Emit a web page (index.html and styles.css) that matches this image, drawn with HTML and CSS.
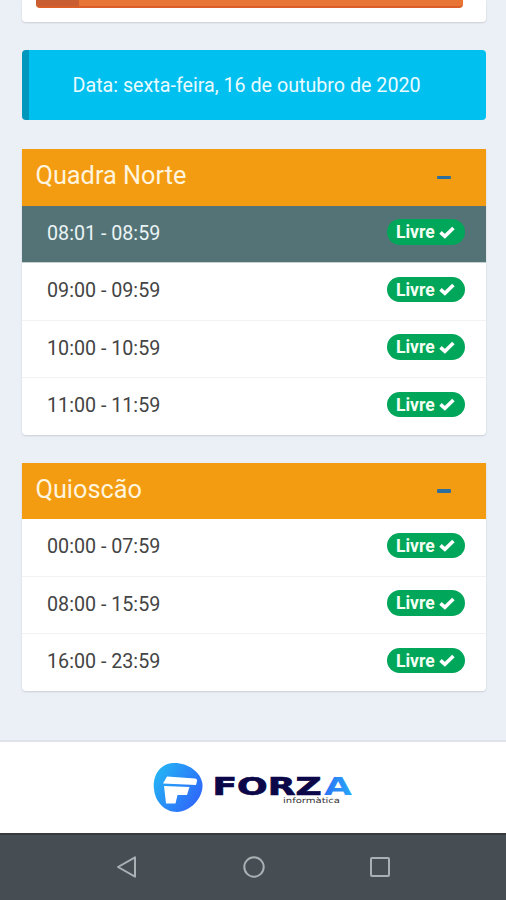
FILE: index.html
```
<!DOCTYPE html>
<html lang="pt-BR">
<head>
<meta charset="utf-8">
<title>Reservas</title>
<link rel="stylesheet" href="styles.css">
</head>
<body>
<svg class="defs" aria-hidden="true">
  <symbol id="check" viewBox="0 0 16 13"><path d="M1.500 6.300 5.900 10.300 14.400 2" fill="none" stroke="#fff" stroke-width="3.600"/></symbol>
</svg>
<main>
  <section class="card top"><div class="progress"><div class="bar"></div></div></section>
  <section class="callout"><span>Data: sexta-feira, 16 de outubro de 2020</span></section>
  <section class="card courts">
    <header><h2>Quadra Norte</h2><i class="minus"></i></header>
    <ul>
      <li class="active"><span class="time">08:01 - 08:59</span><span class="badge">Livre <svg><use href="#check"/></svg></span></li>
      <li><span class="time">09:00 - 09:59</span><span class="badge">Livre <svg><use href="#check"/></svg></span></li>
      <li><span class="time">10:00 - 10:59</span><span class="badge">Livre <svg><use href="#check"/></svg></span></li>
      <li><span class="time">11:00 - 11:59</span><span class="badge">Livre <svg><use href="#check"/></svg></span></li>
    </ul>
  </section>
  <section class="card kiosk">
    <header><h2>Quioscão</h2><i class="minus"></i></header>
    <ul>
      <li><span class="time">00:00 - 07:59</span><span class="badge">Livre <svg><use href="#check"/></svg></span></li>
      <li><span class="time">08:00 - 15:59</span><span class="badge">Livre <svg><use href="#check"/></svg></span></li>
      <li><span class="time">16:00 - 23:59</span><span class="badge">Livre <svg><use href="#check"/></svg></span></li>
    </ul>
  </section>
</main>
<footer>
  <svg class="logo" viewBox="0 0 202 52">
    <defs>
      <linearGradient id="disc" x1="0" y1="0.2" x2="1" y2="0.8"><stop offset="0" stop-color="#25b5f5"/><stop offset="1" stop-color="#2f62fa"/></linearGradient>
      <linearGradient id="tip" x1="0" y1="0" x2="1" y2="0"><stop offset="0" stop-color="#2b70f6"/><stop offset="1" stop-color="#28a9f8"/></linearGradient>
    </defs>
    <path d="M21 1C34 0 49 9 50.500 22C51.500 36 38 50 25 50C12 50 3 39 2 27C0.500 13 8 2 21 1Z" fill="url(#disc)"/>
    <path d="M15 14.500 43 16.500Q45.500 17 45 19L44 23 11 21.500ZM12 24 37.500 25 35 33H25.500L23.500 41.500H14Z" fill="#fff"/>
    <text class="brand" x="60.500" y="32.500" textLength="109" lengthAdjust="spacingAndGlyphs" fill="#0b0748">FORZ</text>
    <text class="brand tip" x="172" y="32.500" textLength="28" lengthAdjust="spacingAndGlyphs" fill="url(#tip)">A</text>
    <text class="sub" x="131" y="41" textLength="57" lengthAdjust="spacingAndGlyphs">informàtica</text>
  </svg>
</footer>
<nav>
  <svg viewBox="0 0 24 24"><path d="M20 2.300V21.700L3 12Z"/></svg>
  <svg viewBox="0 0 24 24"><circle cx="12" cy="12" r="9.700"/></svg>
  <svg viewBox="0 0 24 24"><rect x="3" y="3" width="18" height="18" rx="1"/></svg>
</nav>
</body>
</html>
```
FILE: styles.css
```
* { box-sizing: border-box; }
body {
  margin: 0;
  height: 900px;
  overflow: hidden;
  display: flex;
  flex-direction: column;
  background: #ebeff6;
  color: #444;
  font-family: Roboto, sans-serif;
}
.defs { display: none; }
main { height: 740px; padding: 0 20.500px 0 21.500px; }
.card {
  background: #fff;
  border-radius: 0 0 4px 4px;
  box-shadow: 0 1px 2px rgba(0, 0, 0, 0.14);
}
.top { height: 21.500px; padding: 0 23px 0 14px; }
.progress {
  height: 7.500px;
  background: #e87436;
  border-bottom: 2px solid #d95e27;
  border-radius: 0 0 4px 4px;
  overflow: hidden;
}
.bar { width: 43px; height: 6px; background: #c85e32; }
.callout {
  display: flex;
  align-items: center;
  height: 70px;
  margin-top: 28.500px;
  padding-left: 44px;
  border-left: 7px solid #0097bc;
  border-radius: 4px;
  background: #00c0ef;
  color: #e9fbff;
  font-size: 19.700px;
  white-space: nowrap;
}
.courts { margin-top: 29px; }
.kiosk { margin-top: 28px; }
header {
  display: flex;
  justify-content: space-between;
  height: 56.500px;
  padding: 12px 35px 0 14px;
  background: #f39c12;
  color: #fff4dd;
}
h2 { margin: 0; font-size: 25.300px; font-weight: 400; line-height: 29.500px; }
.minus {
  width: 14px;
  height: 3.500px;
  margin-top: 14.500px;
  border-radius: 1px;
  background: #2c6f9e;
}
ul { margin: 0; padding: 0; list-style: none; }
li {
  display: flex;
  align-items: center;
  justify-content: space-between;
  height: 57.500px;
  padding: 0 21px 3.500px 25.500px;
  border-bottom: 1px solid #f1f2f3;
}
li:last-child { height: 56.500px; border-bottom: 0; }
.active { background: #547377; border-bottom: 1px solid #c5d0d1; color: #eaf4f5; }
.time { padding-top: 2px; font-size: 19.700px; }
.badge {
  display: flex;
  align-items: center;
  justify-content: space-between;
  width: 78px;
  height: 25.500px;
  padding: 0 10px 0 9.500px;
  border-radius: 13px;
  background: #00a65a;
  color: #f4fff4;
  font-size: 17.500px;
  font-weight: 700;
}
.badge svg { width: 16px; height: 13px; }
footer {
  height: 93px;
  border-top: 2px solid #dfe3e9;
  background: #fff;
  display: flex;
  justify-content: center;
  align-items: center;
}
.logo { width: 202px; height: 52px; }
.brand { font: 700 24px "DejaVu Sans", sans-serif; stroke: #0b0748; stroke-width: 0.700px; }
.tip { stroke: none; }
.sub { font: 7.500px "DejaVu Sans", sans-serif; fill: #333; }
nav {
  display: flex;
  justify-content: space-between;
  height: 67px;
  padding: 20px 114px 0 115px;
  border-top: 2px solid #363b3e;
  background: #464e53;
}
nav svg { width: 24px; height: 24px; fill: none; stroke: #aab1b4; stroke-width: 2; stroke-linejoin: round; }
```
